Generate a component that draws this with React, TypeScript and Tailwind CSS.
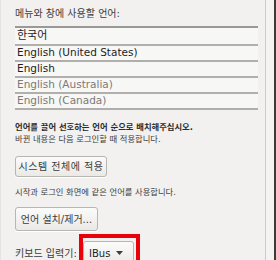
import React from "react";

const langs = [
  { name: "한국어", muted: false, tall: true },
  { name: "English (United States)", muted: false, tall: false },
  { name: "English", muted: false, tall: false },
  { name: "English (Australia)", muted: true, tall: false },
  { name: "English (Canada)", muted: true, tall: false },
];

const font = "font-['DejaVu_Sans','Noto_Sans_CJK_KR',sans-serif]";

const Button: React.FC<{ children: React.ReactNode; className?: string }> = ({ children, className }) => (
  <button
    className={`flex shrink-0 items-center rounded-[3px] border border-[#b8b6b1] bg-gradient-to-b from-[#fbfbfa] to-[#ebe9e6] text-[10px] text-[#3c3c3c] shadow-[0_1px_0_#ffffff] ${className ?? ""}`}
  >
    {children}
  </button>
);

export default function App() {
  return (
    <div className={`flex h-[260px] w-[276px] items-start overflow-hidden bg-[#f2f1f0] ${font}`}>
      {/* Main panel */}
      <div className="flex h-[300px] w-[265px] shrink-0 flex-col border-l border-[#e4e3e0] pl-[14px]">
        <div className="mt-[7px] h-[14px] shrink-0 text-[10px] leading-[14px] text-[#3c3c3c]">메뉴와 창에 사용할 언어:</div>

        {/* Language list */}
        <div className="mt-[5px] w-[243px] shrink-0 border-t-2 border-t-[#9a9995] bg-[#f7f7f6]">
          {langs.map((l) => (
            <div
              key={l.name}
              className={`flex items-center border-b-2 border-b-[#b0afab] px-[2px] text-[10.5px] ${
                l.tall ? "h-[18px] text-[11px]" : "h-[16px]"
              } ${l.muted ? "text-[#7b7a77]" : "text-[#1e1e1e]"}`}
            >
              {l.name}
            </div>
          ))}
        </div>

        <div className="mt-[11px] shrink-0 text-[8.3px] font-bold leading-[12px] text-[#2a2a2a]">
          언어를 끌어 선호하는 언어 순으로 배치해주십시오.
        </div>
        <div className="shrink-0 text-[8.3px] leading-[12px] text-[#3c3c3c]">바뀐 내용은 다음 로그인할 때 적용합니다.</div>

        <Button className="mt-[11px] h-[21px] w-[92px] justify-center tracking-[0.5px]">시스템 전체에 적용</Button>

        <div className="mt-[9px] shrink-0 text-[8.3px] leading-[12px] text-[#3c3c3c]">시작과 로그인 화면에 같은 언어를 사용합니다.</div>

        <Button className="mt-[9px] h-[24px] w-[83px] justify-center">언어 설치/제거...</Button>

        <div className="mt-[3px] flex shrink-0 items-start">
          <span className="mt-[12px] w-[64px] text-[10px] text-[#3c3c3c]">키보드 입력기:</span>
          <div className="border-4 border-[#e8000b] pt-[3px] pr-[2px]">
            <Button className="h-[24px] w-[51px] gap-[6px] pl-[5px]">
              <span className="text-[#1e1e1e]">IBus</span>
              <svg width="7" height="5" viewBox="0 0 7 5">
                <path d="M0 0h7L3.5 4z" fill="#3c3c3c" />
              </svg>
            </Button>
          </div>
        </div>
      </div>

      {/* Right edge */}
      <div className="h-full w-px shrink-0 bg-[#cdcbc7]" />
      <div className="h-full w-[8px] shrink-0 bg-[#f4f3f2]" />
      <div className="h-full w-[2px] shrink-0 bg-[#3c3b37]" />
    </div>
  );
}
